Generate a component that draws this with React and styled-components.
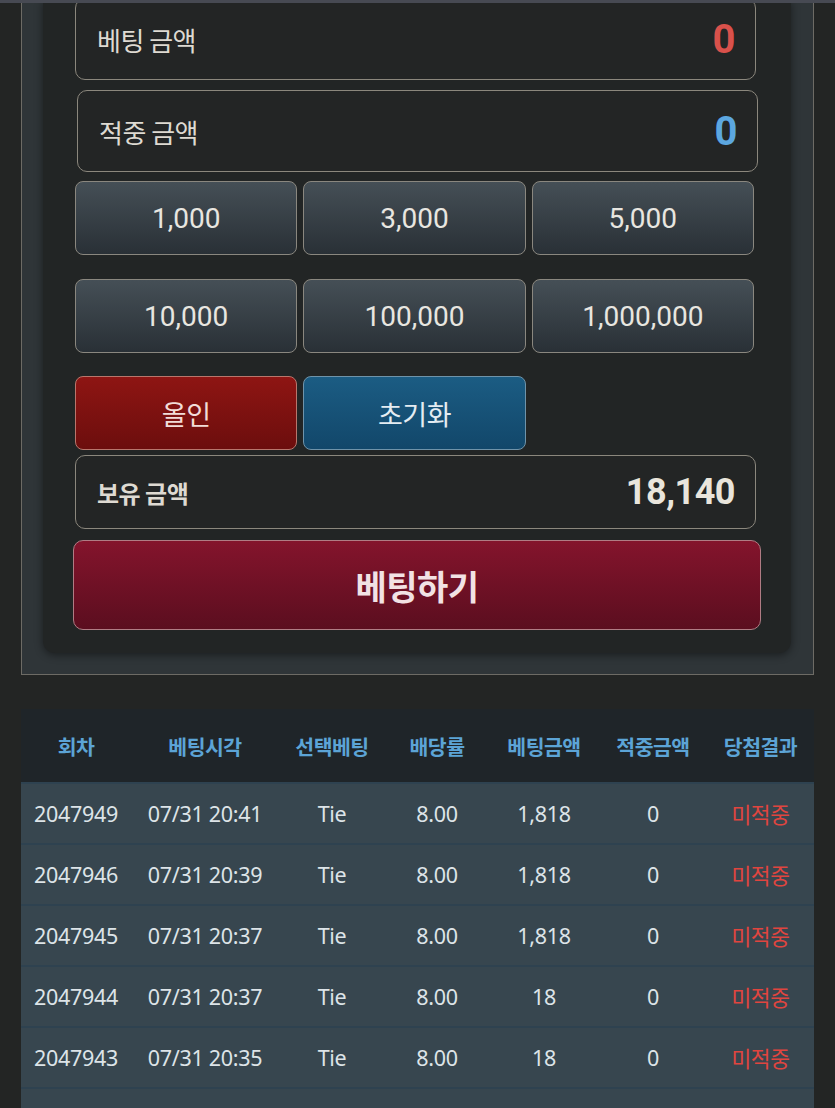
import React from "react";
import styled, { createGlobalStyle } from "styled-components";

const Global = createGlobalStyle`
  html, body { margin: 0; padding: 0; background: #232524; }
  body { font-family: "Noto Sans", "Noto Sans CJK KR", sans-serif; overflow: hidden; }
  * { box-sizing: border-box; }
`;

const TopEdge = styled.div`
  position: fixed;
  top: 0; left: 0; right: 0;
  height: 3px;
  background: #474a53;
  z-index: 5;
`;

const Page = styled.div`
  width: 835px;
  padding: 0 21px;
`;

const Panel = styled.div`
  border: 1px solid #6d6b65;
  border-top: none;
  background: #2f3538;
  padding: 0 22px 21px 21px;
`;

const Card = styled.div`
  background: #222525;
  border-radius: 0 0 12px 12px;
  box-shadow: 0 2px 8px rgba(0, 0, 0, 0.45);
  padding: 0 35px 23px 32px;
  display: flex;
  flex-direction: column;
`;

const Field = styled.div`
  height: ${(p) => p.$h}px;
  margin-top: ${(p) => p.$mt}px;
  margin-left: ${(p) => p.$shift}px;
  margin-right: ${(p) => -p.$shift}px;
  border: 1.5px solid #8b877d;
  border-radius: 10px;
  background: #232525;
  display: flex;
  align-items: center;
  justify-content: space-between;
  padding: 0 20px 0 21px;
`;

const FieldLabel = styled.span`
  font-family: "Noto Sans CJK KR", sans-serif;
  font-size: ${(p) => (p.$bold ? 24 : 26)}px;
  font-weight: ${(p) => (p.$bold ? 700 : 400)};
  color: #dedad2;
  letter-spacing: -0.5px;
`;

const FieldValue = styled.span`
  font-family: Roboto, "Noto Sans", sans-serif;
  font-size: ${(p) => p.$size}px;
  font-weight: 700;
  color: ${(p) => p.$color};
  letter-spacing: -0.5px;
`;

const ChipGrid = styled.div`
  display: grid;
  grid-template-columns: repeat(3, 1fr);
  gap: 6px;
  margin-top: ${(p) => p.$mt}px;
  margin-right: 2px;
`;

const tones = {
  gray: { top: "#454f56", bottom: "#293036", border: "#8a877f", color: "#e8e6e0" },
  red: { top: "#8e1513", bottom: "#6c0e0d", border: "#b8766c", color: "#f2dcd8" },
  blue: { top: "#1b5c83", bottom: "#12476a", border: "#6f93a9", color: "#e4ecf2" },
};

const Chip = styled.button`
  height: 74px;
  border-radius: 8px;
  border: 1.5px solid ${(p) => tones[p.$tone].border};
  background: linear-gradient(180deg, ${(p) => tones[p.$tone].top}, ${(p) => tones[p.$tone].bottom});
  color: ${(p) => tones[p.$tone].color};
  font-family: ${(p) => (p.$korean ? '"Noto Sans CJK KR", sans-serif' : 'Roboto, sans-serif')};
  font-size: ${(p) => (p.$korean ? 27 : 28)}px;
  font-weight: 400;
  padding: 0;
  letter-spacing: ${(p) => (p.$korean ? "-0.5px" : "0")};
`;

const BetButton = styled.button`
  height: 90px;
  margin: 11px -5px 0 -2px;
  border-radius: 10px;
  border: 1.5px solid #b07c84;
  background: linear-gradient(180deg, #84142c, #5b0e1f);
  color: #f2e2e4;
  font-family: "Noto Sans CJK KR", sans-serif;
  font-size: 34px;
  font-weight: 700;
  letter-spacing: -0.5px;
`;

const Table = styled.div`
  margin-top: 34px;
  display: grid;
  grid-template-columns: 110px 148px 106px 104px 110px 108px 107px;
`;

const HeadCell = styled.div`
  height: 73px;
  background: #1f2529;
  display: flex;
  align-items: center;
  justify-content: center;
  font-family: "Noto Sans CJK KR", sans-serif;
  font-size: 20.5px;
  font-weight: 700;
  color: #5ca4d6;
  letter-spacing: -0.5px;
`;

const Cell = styled.div`
  height: 61px;
  background: #37464f;
  border-top: 2px solid #2e4250;
  display: flex;
  align-items: center;
  justify-content: center;
  font-family: "Noto Sans", "Noto Sans CJK KR", sans-serif;
  font-size: 21.5px;
  color: ${(p) => (p.$miss ? "#e0453f" : "#dde4e8")};
  letter-spacing: ${(p) => (p.$miss ? "-0.5px" : "-0.3px")};
  white-space: nowrap;
`;

const heads = ["회차", "베팅시각", "선택베팅", "배당률", "베팅금액", "적중금액", "당첨결과"];
const rows = [
  ["2047949", "07/31 20:41", "1,818"],
  ["2047946", "07/31 20:39", "1,818"],
  ["2047945", "07/31 20:37", "1,818"],
  ["2047944", "07/31 20:37", "18"],
  ["2047943", "07/31 20:35", "18"],
  ["2047942", "07/31 20:33", "18"],
];

export default function App() {
  return (
    <>
      <Global />
      <TopEdge />
      <Page>
        <Panel>
          <Card>
            <Field $h={82} $mt={-2} $shift={0}>
              <FieldLabel>베팅 금액</FieldLabel>
              <FieldValue $size={40} $color="#d9514b">0</FieldValue>
            </Field>
            <Field $h={82} $mt={10} $shift={2}>
              <FieldLabel>적중 금액</FieldLabel>
              <FieldValue $size={40} $color="#5ca7e0">0</FieldValue>
            </Field>
            <ChipGrid $mt={9}>
              <Chip $tone="gray">1,000</Chip>
              <Chip $tone="gray">3,000</Chip>
              <Chip $tone="gray">5,000</Chip>
            </ChipGrid>
            <ChipGrid $mt={24}>
              <Chip $tone="gray">10,000</Chip>
              <Chip $tone="gray">100,000</Chip>
              <Chip $tone="gray">1,000,000</Chip>
            </ChipGrid>
            <ChipGrid $mt={23}>
              <Chip $tone="red" $korean>올인</Chip>
              <Chip $tone="blue" $korean>초기화</Chip>
            </ChipGrid>
            <Field $h={74} $mt={5} $shift={0}>
              <FieldLabel $bold>보유 금액</FieldLabel>
              <FieldValue $size={36} $color="#e9e5dc">18,140</FieldValue>
            </Field>
            <BetButton>베팅하기</BetButton>
          </Card>
        </Panel>
        <Table>
          {heads.map((h) => (
            <HeadCell key={h}>{h}</HeadCell>
          ))}
          {rows.map((r) => (
            <React.Fragment key={r[0]}>
              <Cell>{r[0]}</Cell>
              <Cell>{r[1]}</Cell>
              <Cell>Tie</Cell>
              <Cell>8.00</Cell>
              <Cell>{r[2]}</Cell>
              <Cell>0</Cell>
              <Cell $miss>미적중</Cell>
            </React.Fragment>
          ))}
        </Table>
      </Page>
    </>
  );
}
